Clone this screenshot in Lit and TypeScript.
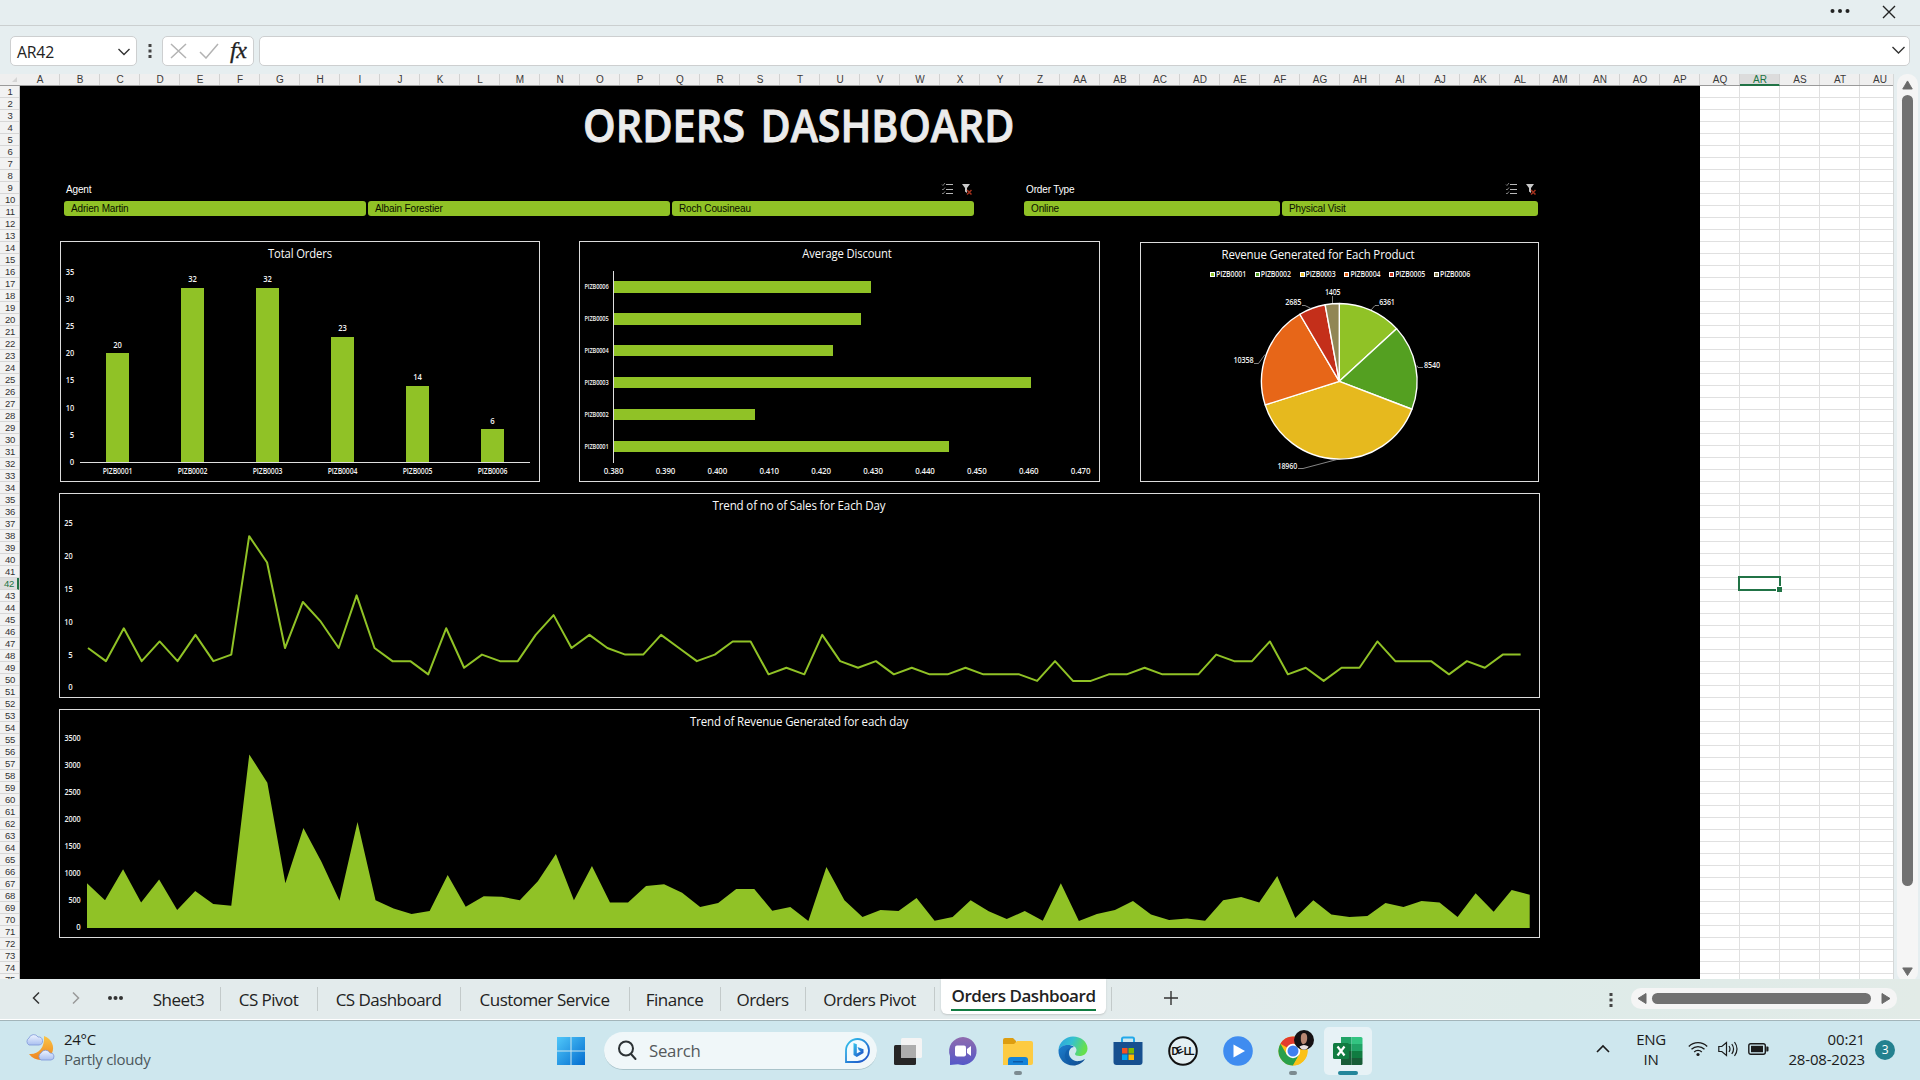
import { LitElement, html, svg, css } from "lit";
import { customElement, property } from "lit/decorators.js";

const GREEN = "#90c226";

const colName = (i: number): string =>
  i < 26 ? String.fromCharCode(65 + i) : "A" + String.fromCharCode(65 + i - 26);

const COLS = Array.from({ length: 47 }, (_, i) => colName(i));
const ROWS = Array.from({ length: 75 }, (_, i) => i + 1);
const PRODUCTS = ["PIZB0001", "PIZB0002", "PIZB0003", "PIZB0004", "PIZB0005", "PIZB0006"];

const ORDERS = [20, 32, 32, 23, 14, 6];
const DISCOUNT_END = [949, 755, 1031, 833, 861, 871];
const REVENUE = [6361, 8540, 18960, 10358, 2685, 1405];
const PIE_COLORS = ["#90c226", "#54a021", "#e6b91e", "#e76618", "#c42f1a", "#918655"];

const SALES = [
  6, 4, 9, 4, 7, 4, 8, 4, 5, 23, 19, 6, 13, 10, 6, 14, 6, 4, 4, 2, 9, 3, 5, 4, 4, 8, 11, 6, 8, 6, 5, 5, 8, 6, 4, 5,
  7, 7, 2, 3, 2, 8, 4, 3, 4, 2, 3, 2, 2, 3, 2, 2, 2, 1, 4, 1, 1, 2, 2, 3, 2, 2, 2, 5, 4, 4, 7, 2, 3, 1, 3, 3, 7, 4,
  4, 4, 2, 4, 3, 5, 5,
];

const DAILY = [
  830, 515, 1090, 470, 900, 335, 683, 445, 412, 3215, 2690, 830, 1850, 1228, 505, 1962, 515, 360, 258, 315, 980, 395,
  590, 578, 515, 864, 1370, 515, 1148, 470, 470, 778, 808, 654, 388, 462, 722, 722, 320, 388, 128, 1130, 515, 202, 333,
  315, 555, 134, 202, 515, 308, 166, 315, 134, 830, 128, 258, 333, 500, 252, 148, 178, 134, 515, 573, 470, 962, 185,
  515, 252, 202, 222, 462, 388, 500, 470, 202, 642, 302, 703, 617,
];

type Anchor = "start" | "middle" | "end";

const label = (x: number, base: number, text: string | number, len: number, size = 8.2, anchor: Anchor = "middle", fill = "#f2f2f2", weight = 600) =>
  svg`<text x=${x} y=${base} font-size=${size} font-weight=${weight} fill=${fill} text-anchor=${anchor} textLength=${len} lengthAdjust="spacingAndGlyphs">${text}</text>`;

const heading = (x: number, base: number, text: string, len: number) =>
  label(x, base + 0.4, text, len, 12.8, "middle", "#fafafa", 400);

@customElement("bar-panel")
class BarPanel extends LitElement {
  static styles = css`
    :host { display: block; width: 480px; height: 241px; }
    svg { display: block; font-family: "Open Sans", "Noto Sans", sans-serif; }
  `;
  render() {
    const h = (v: number) => v * 5.44;
    return html`<svg width="480" height="241" viewBox="60 241 480 241">
      <rect x="60.5" y="241.5" width="479" height="240" fill="none" stroke="#dcdcdc" />
      ${heading(300, 258, "Total Orders", 64)}
      ${[0, 5, 10, 15, 20, 25, 30, 35].map((v) => label(74, 465 - h(v), v, v < 10 ? 4.3 : 8.2, 8.2, "end"))}
      ${ORDERS.map((v, i) => svg`
        <rect x=${106 + i * 75} y=${Math.round(462 - h(v))} width="23" height=${462 - Math.round(462 - h(v))} fill=${GREEN} />
        ${label(117.5 + i * 75, 456.5 - h(v), v, v < 10 ? 4.3 : 8.4)}
        ${label(117.5 + i * 75, 474, PRODUCTS[i], 29.5)}`)}
      <rect x="80" y="462" width="450" height="1" fill="#e0e0e0" />
    </svg>`;
  }
}

@customElement("discount-panel")
class DiscountPanel extends LitElement {
  static styles = css`
    :host { display: block; width: 521px; height: 241px; }
    svg { display: block; font-family: "Open Sans", "Noto Sans", sans-serif; }
  `;
  render() {
    return html`<svg width="521" height="241" viewBox="579 241 521 241">
      <rect x="579.5" y="241.5" width="520" height="240" fill="none" stroke="#dcdcdc" />
      ${heading(847, 258, "Average Discount", 89.5)}
      ${DISCOUNT_END.map((end, i) => {
        const y = 441 - i * 32;
        return svg`<rect x="614" y=${y} width=${end - 614} height=${i > 3 ? 12 : 11} fill=${GREEN} />
          ${label(608.5, y + 7.6, PRODUCTS[i], 24, 6.4, "end")}`;
      })}
      <rect x="613" y="271" width="1" height="192" fill="#e0e0e0" />
      ${Array.from({ length: 10 }, (_, i) => label(613.5 + i * 51.9, 474, (0.38 + i * 0.01).toFixed(3), 19.5))}
    </svg>`;
  }
}

@customElement("pie-panel")
class PiePanel extends LitElement {
  static styles = css`
    :host { display: block; width: 399px; height: 240px; }
    svg { display: block; font-family: "Open Sans", "Noto Sans", sans-serif; }
  `;
  render() {
    const cx = 1339.3, cy = 381.3, r = 77.8;
    const total = REVENUE.reduce((a, b) => a + b, 0);
    let acc = 0;
    const at = (f: number) => `${cx + r * Math.sin(f * 2 * Math.PI)} ${cy - r * Math.cos(f * 2 * Math.PI)}`;
    const slices = REVENUE.map((v, i) => {
      const a = acc / total;
      acc += v;
      return svg`<path d="M${cx} ${cy}L${at(a)}A${r} ${r} 0 0 1 ${at(acc / total)}Z" fill=${PIE_COLORS[i]} stroke="#fff" stroke-width="1.4" stroke-linejoin="round" />`;
    });
    return html`<svg width="399" height="240" viewBox="1140 242 399 240">
      <rect x="1140.5" y="242.5" width="398" height="239" fill="none" stroke="#dcdcdc" />
      ${heading(1318, 259, "Revenue Generated for Each Product", 193)}
      ${PRODUCTS.map((p, i) => svg`
        <rect x=${1210.5 + Math.round(i * 44.8)} y="272.5" width="4" height="4" fill=${PIE_COLORS[i]} stroke="#fff" />
        ${label(1216 + i * 44.8, 277, p, 30, 8.2, "start")}`)}
      ${slices}
      <g fill="none" stroke="#a6a6a6" stroke-width="0.8">
        <path d="M1332.5 296v7M1302 305.5h3l6 3M1379 305.5h-4l-4 4.500M1423 367.500h-5l-1 -2M1254 363.500h4.500l6.500 -9M1298 468.500h5l34 -9" />
      </g>
      ${label(1332.7, 295, "1405", 15.5)} ${label(1293.3, 305, "2685", 16)} ${label(1387, 305, "6361", 15.5)}
      ${label(1432, 368, "8540", 16)} ${label(1243.5, 363, "10358", 20)} ${label(1287.3, 469, "18960", 19.5)}
    </svg>`;
  }
}

@customElement("line-panel")
class LinePanel extends LitElement {
  static styles = css`
    :host { display: block; width: 1481px; height: 205px; }
    svg { display: block; font-family: "Open Sans", "Noto Sans", sans-serif; }
  `;
  render() {
    const pts = SALES.map((v, i) => `${88 + i * 17.908},${687.5 - v * 6.58}`).join(" ");
    return html`<svg width="1481" height="205" viewBox="59 493 1481 205">
      <rect x="59.5" y="493.5" width="1480" height="204" fill="none" stroke="#dcdcdc" />
      ${heading(799, 510, "Trend of no of Sales for Each Day", 173)}
      ${[0, 5, 10, 15, 20, 25].map((v) => label(72.5, 690.4 - v * 6.58, v, v < 10 ? 4.3 : 8.2, 8.2, "end"))}
      <polyline points=${pts} fill="none" stroke=${GREEN} stroke-width="2" stroke-linejoin="round" />
    </svg>`;
  }
}

@customElement("area-panel")
class AreaPanel extends LitElement {
  static styles = css`
    :host { display: block; width: 1481px; height: 229px; }
    svg { display: block; font-family: "Open Sans", "Noto Sans", sans-serif; }
  `;
  render() {
    const pts = DAILY.map((v, i) => `${87 + i * 18.034},${928 - v * 0.054}`).join(" ");
    return html`<svg width="1481" height="229" viewBox="59 709 1481 229">
      <rect x="59.5" y="709.5" width="1480" height="228" fill="none" stroke="#dcdcdc" />
      ${heading(799, 726, "Trend of Revenue Generated for each day", 218)}
      ${[0, 500, 1000, 1500, 2000, 2500, 3000, 3500].map((v) =>
        label(80.5, 930.2 - v * 0.054, v, v === 0 ? 4.3 : v < 1000 ? 12 : 16, 8.2, "end"))}
      <polygon points="87,928 ${pts} 1529.7,928" fill=${GREEN} />
    </svg>`;
  }
}

@customElement("slicer-box")
class SlicerBox extends LitElement {
  @property() name = "";
  @property({ type: Array }) items: string[] = [];
  static styles = css`
    :host { display: block; }
    .head { display: flex; align-items: center; height: 14px; padding: 0 1px 0 2px; color: #fff; margin-bottom: 5px; }
    .name { flex: 1; }
    .head svg { display: block; }
    .items { display: flex; gap: 2px; }
    .item { flex: 1; height: 15px; line-height: 16px; border-radius: 3px; background: #90c226; color: #0a0f00; padding-left: 7px; }
  `;
  render() {
    return html`
      <div class="head">
        <span class="name">${this.name}</span>
        <svg width="32" height="12" viewBox="0 0 32 12">
          <path d="M5 1.500h7M5 6.500h7M5 10.500h7" stroke="#b8b8b8" fill="none" />
          <path d="M1 1.500l1 1 2-2.500M1 6l1 1 2-2.500M1 10l1 1 2-2.500" stroke="#8a8a8a" stroke-width=".9" fill="none" />
          <path d="M21 1h8l-3 4v5l-2-1.500V5z" fill="#c9c9c9" />
          <path d="M26 7l4.500 4.500M30.500 7L26 11.500" stroke="#a3301c" stroke-width="1.500" />
        </svg>
      </div>
      <div class="items">${this.items.map((t) => html`<div class="item">${t}</div>`)}</div>`;
  }
}

@customElement("task-bar")
class TaskBar extends LitElement {
  static styles = css`
    :host { display: flex; height: 59px; background: #cee7ee; font-family: "Open Sans", "Noto Sans", sans-serif; font-size: 15px; color: #1b1b1b; letter-spacing: -0.27px; }
    svg { display: block; }
    .weather { display: flex; gap: 8px; width: 528px; padding: 8px 0 0 24px; box-sizing: content-box; }
    .weather svg { margin-top: 1px; }
    .lines { line-height: 20px; white-space: nowrap; }
    .muted { color: #4c585c; }
    .apps { display: flex; align-items: center; flex: 1; }
    .start { width: 37px; padding-left: 4px; box-sizing: content-box; margin-right: 11px; }
    .search { display: flex; align-items: center; width: 273px; height: 38px; margin-right: 3px; border-radius: 19px; background: #f0f7f9; border-bottom: 1px solid #a9c3ca; box-sizing: border-box; padding: 0 6px 0 12px; gap: 11px; color: #55595b; font-size: 16.800px; }
    .search span { flex: 1; }
    .app { width: 55.1px; height: 48px; display: flex; flex-direction: column; align-items: center; justify-content: center; position: relative; }
    .tile { position: absolute; inset: 0 3.500px; border-radius: 5px; background: #e7f2f6; }
    .app svg { position: relative; overflow: visible; }
    .dot { position: absolute; bottom: 0; width: 8px; height: 4px; border-radius: 2px; background: #7c8b90; }
    .dot.on { width: 20px; background: #24869a; }
    .tray { display: flex; align-items: flex-start; padding: 8px 25px 0 0; }
    .lang { width: 48px; margin-left: 18px; text-align: center; line-height: 20px; }
    .status { display: flex; gap: 10px; margin: 10px 0 0 13px; }
    .clock { width: 96px; text-align: right; line-height: 20px; white-space: nowrap; letter-spacing: -0.17px; }
    .badge { width: 20px; height: 20px; border-radius: 50%; background: #24818f; color: #fff; text-align: center; font-size: 12px; line-height: 20px; margin: 11px 0 0 10px; }
    .chev { margin: 15px -1px 0 1px; }
  `;
  app(icon: unknown, dot = "", tile = false) {
    return html`<div class="app">${tile ? html`<div class="tile"></div>` : ""}${icon}${dot ? html`<i class="dot ${dot}"></i>` : ""}</div>`;
  }
  render() {
    return html`
      <div class="weather">
        <svg width="32" height="34" viewBox="0 0 32 34">
          <defs>
            <linearGradient id="mo" x1="0" y1="0" x2="0" y2="1"><stop offset="0" stop-color="#fbc545" /><stop offset="1" stop-color="#ef8420" /></linearGradient>
            <linearGradient id="cl" x1="0" y1="0" x2="0" y2="1"><stop offset="0" stop-color="#eef4ff" /><stop offset="1" stop-color="#a9bff0" /></linearGradient>
          </defs>
          <path d="M20 6c8 3 11 11 8 17-4 8-16 10-23 1 9 1 16-6 15-18z" fill="url(#mo)" />
          <path d="M5 15a4 4 0 0 1 0-7 5 5 0 0 1 9-1 4 4 0 0 1 1 8z" fill="url(#cl)" stroke="#7f98d9" stroke-width=".8" />
          <path d="M17 30a4 4 0 0 1 0-7 5 5 0 0 1 9 0 3.500 3.500 0 0 1 1 7z" fill="url(#cl)" stroke="#7f98d9" stroke-width=".8" />
        </svg>
        <div class="lines"><div>24°C</div><div class="muted">Partly cloudy</div></div>
      </div>
      <div class="apps">
        <div class="start">
          <svg width="30" height="30" viewBox="0 0 30 30">
            <defs><linearGradient id="w" gradientUnits="userSpaceOnUse" x1="0" y1="0" x2="30" y2="30"><stop offset="0" stop-color="#53cbfb" /><stop offset="1" stop-color="#0069ce" /></linearGradient></defs>
            <path d="M1 1h13.500v13.500H1zM15.500 1H29v13.500H15.500zM1 15.500h13.500V29H1zM15.500 15.500H29V29H15.500z" fill="url(#w)" />
          </svg>
        </div>
        <div class="search">
          <svg width="22" height="22" viewBox="0 0 22 22" fill="none" stroke="#2c3235" stroke-width="2"><circle cx="10" cy="9.500" r="7" /><path d="M15 15l4.500 5" stroke-linecap="round" /></svg>
          <span>Search</span>
          <svg width="27" height="27" viewBox="0 0 27 27">
            <defs><linearGradient id="b" x1="0" y1="0" x2="1" y2="1"><stop offset="0" stop-color="#35c7ee" /><stop offset="1" stop-color="#1a48c4" /></linearGradient></defs>
            <path d="M2 25V13.500A11.500 11.500 0 1 1 13.500 25z" fill="#f2fbff" stroke="url(#b)" stroke-width="1.8" />
            <path d="M9.500 6l3.300 1.200v9.300l4-2.300-2-1-1.300-3.200 6 2.300v3.600l-6.700 4-3.300-2z" fill="url(#b)" />
          </svg>
        </div>
        ${this.app(html`<svg width="30" height="30" viewBox="0 0 30 30">
          <rect x="1" y="9" width="22" height="20" rx="1.500" fill="#262626" /><rect x="8" y="2" width="21" height="20" rx="1.500" fill="#f4f4f4" /><path d="M8 9h15v13H8z" fill="#adadad" /></svg>`)}
        ${this.app(html`<svg width="30" height="30" viewBox="0 0 30 30">
          <defs><linearGradient id="t" x1="0" y1="0" x2="0" y2="1"><stop offset="0" stop-color="#8f6bae" /><stop offset="1" stop-color="#5558c8" /></linearGradient></defs>
          <path d="M15 1a14 14 0 1 1-5 27.200L2 29V20A14 14 0 0 1 15 1z" fill="url(#t)" /><rect x="7" y="9.500" width="11" height="11" rx="2" fill="#fff" /><path d="M19 13l4-3v10l-4-3z" fill="#fff" /></svg>`)}
        ${this.app(html`<svg width="32" height="30" viewBox="0 0 32 30">
          <path d="M1 4q0-2 2-2h8l3 3v6H1z" fill="#dd9d10" /><path d="M1 8h11l3-3h14q2 0 2 2v20q0 2-2 2H1z" fill="#fdcb42" /><path d="M6 29v-5q0-3 3-3h14q3 0 3 3v5z" fill="#1583d8" /><path d="M11 25h10v1.500H11z" fill="#0b5aa8" /></svg>`, "off")}
        ${this.app(html`<svg width="30" height="30" viewBox="0 0 30 30">
          <defs><linearGradient id="e1" x1="0" y1="0" x2="1" y2=".3"><stop offset="0" stop-color="#2a9fe0" /><stop offset=".5" stop-color="#35c1d0" /><stop offset="1" stop-color="#66e04d" /></linearGradient>
          <linearGradient id="e2" x1="0" y1="0" x2="1" y2="1"><stop offset="0" stop-color="#1b7fd0" /><stop offset="1" stop-color="#114a8c" /></linearGradient></defs>
          <path d="M.5 14C1 6 8 .5 15 .5c8 0 14.500 5.500 14.500 12 0 5-4 7.500-8 7.500-3 0-4.500-1-4.500-2 0-1 1.500-2 1.500-4C18.500 11 15 9 11 9 6 9 2 11 .5 14z" fill="url(#e1)" />
          <path d="M.5 14C2 10.500 6 9 9.500 9c3 0 5 .5 6.500 2-3 0-5 3-5 6 0 5 5 9 10 8 2.500-.3 4.500-1.300 6-2-2.500 4-7 6.500-12 6.500C7 29.500 0 23 .5 14z" fill="url(#e2)" />
          <path d="M12 12c-5 2-7 9-3 13 3 3.500 6 4.500 9 4.300-4-1.300-8-6-7.500-11 .2-3 1-4.800 1.500-6.300z" fill="#0d5aa7" opacity=".6" /></svg>`)}
        ${this.app(html`<svg width="30" height="30" viewBox="0 0 30 30">
          <path d="M9 6V3q0-1.500 1.500-1.500h9Q21 1.500 21 3v3" fill="none" stroke="#22a9ea" stroke-width="2" /><path d="M.5 6h29v20q0 3-3 3h-23q-3 0-3-3z" fill="#17508f" />
          <path d="M9 12h5.500v5.500H9z" fill="#f25022" /><path d="M15.500 12H21v5.500h-5.500z" fill="#7fba00" /><path d="M9 18.500h5.500V24H9z" fill="#00a4ef" /><path d="M15.500 18.500H21V24h-5.500z" fill="#ffb900" /></svg>`)}
        ${this.app(html`<svg width="30" height="30" viewBox="0 0 30 30">
          <circle cx="15" cy="15" r="13.800" fill="#e4f0f3" stroke="#111" stroke-width="2" /><g font-family="Liberation Sans, sans-serif" font-weight="700" font-size="10" letter-spacing="0" fill="#111"><text y="18.600" x="3.500 10 15.700 20.500" rotate="0 -25 0 0">DELL</text></g></svg>`)}
        ${this.app(html`<svg width="30" height="30" viewBox="0 0 30 30"><circle cx="15" cy="15" r="14.800" fill="#3f8cf0" /><path d="M10.500 8.500v13L22 15z" fill="#fff" /></svg>`)}
        ${this.app(html`<svg width="30" height="30" viewBox="0 0 30 30">
          <circle cx="15" cy="15" r="14.500" fill="#fbc116" />
          <path d="M15 15L2.440 7.750A14.500 14.500 0 0 1 27.560 7.750z" fill="#e33b2e" />
          <path d="M2.440 7.750A14.500 14.500 0 0 0 15 29.500l6.300-11L15 15 8.700 18.500z" fill="#29a04a" />
          <path d="M27.560 7.750H15l6.300 10.800L15 29.500A14.500 14.500 0 0 0 27.560 7.750z" fill="#fbc116" />
          <circle cx="15" cy="15" r="7.200" fill="#fff" /><circle cx="15" cy="15" r="5.500" fill="#3f7fee" />
          <circle cx="26" cy="4" r="10" fill="#151113" /><path d="M22.800 2q0-5 3.200-5t3.200 5q0 5-3.200 6t-3.200-6z" fill="#b98772" /><path d="M21.500 10.500q4.500-3 9 0-1 3-4.500 3.300-3.500-.3-4.500-3.300z" fill="#e9dfdf" /></svg>`, "off")}
        ${this.app(html`<svg width="30" height="30" viewBox="0 0 30 30">
          <path d="M8 1h10.500v7H8z" fill="#21a366" /><path d="M18.500 1H28q1.500 0 1.500 1.500V8h-11z" fill="#33c481" /><path d="M8 8h10.500v7H8z" fill="#107c41" /><path d="M18.500 8h11v7h-11z" fill="#21a366" /><path d="M8 15h10.500v14H8z" fill="#185c37" /><path d="M18.500 15h11v7h-11z" fill="#107c41" /><path d="M18.500 22h11v5.500q0 1.500-1.500 1.500h-9.500z" fill="#185c37" />
          <rect x="0" y="7" width="16" height="16" rx="1.500" fill="#107c41" /><path d="M4.500 10.500l7 9M11.500 10.500l-7 9" stroke="#fff" stroke-width="2.200" /></svg>`, "on", true)}
      </div>
      <div class="tray">
        <svg class="chev" width="14" height="10" viewBox="0 0 14 10"><path d="M1 8l6-6 6 6" fill="none" stroke="#1b1b1b" stroke-width="1.600" /></svg>
        <div class="lang"><div>ENG</div><div>IN</div></div>
        <div class="status">
          <svg width="20" height="20" viewBox="0 0 20 20" fill="none" stroke="#1b1b1b" stroke-width="1.300"><path d="M.8 7.500a13 13 0 0 1 18.400 0M3.500 10.300a9.200 9.200 0 0 1 13 0M6.200 13a5.400 5.400 0 0 1 7.600 0" /><circle cx="10" cy="15.500" r="1.600" fill="#1b1b1b" stroke="none" /></svg>
          <svg width="20" height="20" viewBox="0 0 20 20" fill="none" stroke="#1b1b1b" stroke-width="1.200"><path d="M.8 7.500h3L8.500 3.500v13l-4.700-4h-3zM11 7q2 3 0 6M13.800 5q3.500 5 0 10M16.500 3q5 7 0 14" /></svg>
          <svg width="21" height="20" viewBox="0 0 21 20"><rect x=".8" y="4.700" width="16.500" height="10.600" rx="2" fill="none" stroke="#1b1b1b" stroke-width="1.400" /><rect x="3" y="6.800" width="12" height="6.400" fill="#1b1b1b" /><path d="M18.300 7.500h1.200q1 0 1 1v3q0 1-1 1h-1.200z" fill="#1b1b1b" /></svg>
        </div>
        <div class="clock"><div>00:21</div><div>28-08-2023</div></div>
        <div class="badge">3</div>
      </div>`;
  }
}

@customElement("app-root")
class AppRoot extends LitElement {
  static styles = css`
    :host { display: flex; flex-direction: column; width: 1920px; height: 1080px; overflow: hidden; background: #e6eef0; font-family: "Open Sans", "Noto Sans", sans-serif; color: #222; }
    * { box-sizing: border-box; }
    svg { display: block; }
    .title-bar { height: 26px; border-bottom: 1px solid #cbcfd0; display: flex; justify-content: flex-end; align-items: center; gap: 32px; padding: 0 24px 1px 0; flex: none; }
    .formula { height: 48px; display: flex; padding: 10px 10px 8px; flex: none; }
    .box { height: 30px; background: #fff; border: 1px solid #cdcfd0; border-radius: 5px; display: flex; align-items: center; }
    .name-box { width: 127px; padding: 1px 6px 0; font-size: 15.800px; letter-spacing: -0.2px; justify-content: space-between; }
    .vdots { width: 25px; display: flex; justify-content: center; align-items: center; }
    .fx { width: 92px; margin-right: 5px; gap: 12px; padding-left: 7px; }
    .fx i { font: italic 400 24px/24px "Liberation Serif", serif; letter-spacing: -0.5px; color: #222; -webkit-text-stroke: 0.3px #222; margin: -3px 0 0 -1px; }
    .input { flex: 1; justify-content: flex-end; padding: 0 4px 2px 0; }
    .work { display: flex; height: 905px; flex: none; }
    .sheet { width: 1894px; height: 905px; overflow: hidden; flex: none; border-right: 1px solid #d5d8d8; font-family: "Liberation Sans", Arial, sans-serif; }
    .cols { display: flex; height: 12px; background: #efefef; border-bottom: 1px solid #9a9a9a; font-size: 10px; line-height: 12px; color: #3a3a3a; }
    .corner { width: 20px; flex: none; display: flex; justify-content: flex-end; align-items: flex-end; padding: 0 3px 3px 0; }
    .col { width: 40px; flex: none; text-align: center; border-right: 1px solid #d2d2d2; height: 11px; padding-left: 1px; }
    .col.sel { background: #dcdcdc; color: #1a7443; border-bottom: 2px solid #217346; height: 12px; }
    .body { display: flex; }
    .rows { width: 20px; flex: none; background: #f2f2f2; border-right: 1px solid #c4c4c4; }
    .row { height: 12px; line-height: 12px; font-size: 9.500px; text-align: center; letter-spacing: -0.4px; color: #333; border-bottom: 1px solid #d6d6d6; padding-left: 1px; }
    .row.sel { background: #dedede; color: #1a7443; border-right: 2px solid #217346; }
    .dash { width: 1680px; height: 900px; background: #000; flex: none; padding: 14px 0 0 39px; font-size: 10px; letter-spacing: -0.15px; }
    .heading { margin-left: 523px; overflow: visible; }
    .heading text { font: 600 45px "Open Sans", sans-serif; fill: #ebebeb; stroke: #ebebeb; stroke-width: 0.9px; letter-spacing: 0; }
    .slicers { display: flex; gap: 50px; margin: 24px 0 0 5px; }
    .agent { width: 910px; }
    .type { width: 514px; }
    .top { display: flex; margin-top: 25px; padding-left: 1px; }
    .top discount-panel { margin-left: 39px; }
    .top pie-panel { margin: 1px 0 0 40px; }
    line-panel { margin-top: 11px; }
    area-panel { margin-top: 11px; }
    .grid { flex: 1; height: 900px; background-color: #fff; background-image: linear-gradient(to left, #e0e0e0 1px, transparent 1px), linear-gradient(to top, #e0e0e0 1px, transparent 1px); background-size: 40px 12px; position: relative; }
    .cursor { position: absolute; left: 38px; top: 490px; width: 43px; height: 15px; border: 2px solid #217346; }
    .handle { position: absolute; right: -3px; bottom: -3px; width: 6px; height: 6px; background: #217346; border: solid #fff; border-width: 1px 0 0 1px; }
    .vscroll { width: 21px; height: 908px; margin-left: 3px; border-radius: 10px; background: #f5f5f5; display: flex; flex-direction: column; align-items: center; padding: 6px 0; }
    .vthumb { width: 11px; height: 791px; border-radius: 5.500px; background: #717171; margin: 5px 0 81px; flex: none; }
    .tabs { height: 42px; flex: none; display: flex; background: linear-gradient(90deg, #e3ebec 55%, #deebe9 80%, #e2ebe7); border-bottom: 1px solid #a3b5ba; box-shadow: inset 0 -1px #fff; font-size: 17px; letter-spacing: -0.54px; white-space: nowrap; }
    .nav { width: 138px; padding: 12px 0 0 32px; display: flex; gap: 32px; flex: none; }
    .dots { margin-left: -4px; }
    .tab { height: 24px; margin-top: 8px; line-height: 25px; text-align: center; border-right: 1px solid #c3caca; flex: none; padding-right: 1px; }
    .active { width: 165px; height: 35px; margin-left: 6px; background: #fff; border-radius: 0 0 6px 6px; display: flex; justify-content: center; font-weight: 600; box-shadow: 0 1px 2px #c2c8c8; flex: none; }
    .active span { height: 32px; line-height: 34px; border-bottom: 2px solid #107c41; width: 145px; display: flex; justify-content: center; letter-spacing: -0.45px; }
    .sep { width: 1px; height: 24px; margin: 8px 0 0 5px; background: #c3caca; }
    .plus { margin: 12px 0 0 52px; }
    .more { margin: 14px 18px 0 auto; }
    .hscroll { width: 266px; height: 21px; margin: 9px 23px 0 0; background: #f5f5f5; border-radius: 10px; display: flex; align-items: center; justify-content: space-between; padding: 0 6px; }
    .hthumb { width: 219px; height: 11px; border-radius: 5.500px; background: #717171; margin-right: 5px; }
  `;
  render() {
    const tabs: [string, number][] = [["Sheet3", 83], ["CS Pivot", 97], ["CS Dashboard", 143], ["Customer Service", 169], ["Finance", 91], ["Orders", 85], ["Orders Pivot", 129]];
    const vdots = html`<svg width="4" height="14" viewBox="0 0 4 14"><path d="M.5 0h3v3h-3zM.5 5.500h3v3h-3zM.5 11h3v3h-3z" fill="#444" /></svg>`;
    return html`
      <div class="title-bar">
        <svg width="20" height="6" viewBox="0 0 20 6" fill="#222"><circle cx="2.500" cy="2" r="2" /><circle cx="10" cy="2" r="2" /><circle cx="17.500" cy="2" r="2" /></svg>
        <svg width="14" height="14" viewBox="0 0 14 14"><path d="M1 1l12 12M13 1L1 13" stroke="#222" stroke-width="1.400" /></svg>
      </div>
      <div class="formula">
        <div class="box name-box"><span>AR42</span><svg width="12" height="8" viewBox="0 0 12 8"><path d="M.5 1L6 6.500 11.500 1" fill="none" stroke="#333" stroke-width="1.400" /></svg></div>
        <div class="vdots">${vdots}</div>
        <div class="box fx">
          <svg width="17" height="16" viewBox="0 0 17 16"><path d="M1 1l15 14M16 1L1 15" stroke="#b3b3b3" stroke-width="1.500" /></svg>
          <svg width="20" height="16" viewBox="0 0 20 16"><path d="M1 9l6 6L19 1" fill="none" stroke="#b3b3b3" stroke-width="1.500" /></svg>
          <i>fx</i>
        </div>
        <div class="box input"><svg width="13" height="8" viewBox="0 0 13 8"><path d="M.5 1l6 6 6-6" fill="none" stroke="#333" stroke-width="1.400" /></svg></div>
      </div>
      <div class="work">
        <div class="sheet">
          <div class="cols">
            <div class="corner"><svg width="5" height="5" viewBox="0 0 5 5"><path d="M5 0v5H0z" fill="#d5d5d5" /></svg></div>
            ${COLS.map((c) => html`<div class="col ${c === "AR" ? "sel" : ""}">${c}</div>`)}
          </div>
          <div class="body">
            <div class="rows">${ROWS.map((r) => html`<div class="row ${r === 42 ? "sel" : ""}">${r}</div>`)}</div>
            <div class="dash">
              <svg class="heading" width="440" height="58" viewBox="0 0 440 58">
                <text x="1" y="42" textLength="162" lengthAdjust="spacingAndGlyphs">ORDERS</text>
                <text x="178.500" y="42" textLength="254" lengthAdjust="spacingAndGlyphs">DASHBOARD</text>
              </svg>
              <div class="slicers">
                <slicer-box class="agent" name="Agent" .items=${["Adrien Martin", "Albain Forestier", "Roch Cousineau"]}></slicer-box>
                <slicer-box class="type" name="Order Type" .items=${["Online", "Physical Visit"]}></slicer-box>
              </div>
              <div class="top"><bar-panel></bar-panel><discount-panel></discount-panel><pie-panel></pie-panel></div>
              <line-panel></line-panel>
              <area-panel></area-panel>
            </div>
            <div class="grid"><div class="cursor"><div class="handle"></div></div></div>
          </div>
        </div>
        <div class="vscroll">
          <svg width="11" height="10" viewBox="0 0 11 10"><path d="M5.500 1l5 8.500H.5z" fill="#6b6b6b" stroke="#6b6b6b" stroke-linejoin="round" /></svg>
          <div class="vthumb"></div>
          <svg width="11" height="10" viewBox="0 0 11 10"><path d="M.5 1h10l-5 8z" fill="#6b6b6b" stroke="#6b6b6b" stroke-linejoin="round" /></svg>
        </div>
      </div>
      <div class="tabs">
        <div class="nav">
          <svg width="8" height="14" viewBox="0 0 8 14"><path d="M7 1.500L1.500 7 7 12.500" fill="none" stroke="#333" stroke-width="1.500" /></svg>
          <svg width="8" height="14" viewBox="0 0 8 14"><path d="M1 1.500L6.500 7 1 12.500" fill="none" stroke="#999" stroke-width="1.500" /></svg>
          <svg class="dots" width="15" height="14" viewBox="0 0 15 14" fill="#333"><circle cx="2" cy="7" r="2" /><circle cx="7.500" cy="7" r="2" /><circle cx="13" cy="7" r="2" /></svg>
        </div>
        ${tabs.map(([t, w]) => html`<div class="tab" style="width:${w}px">${t}</div>`)}
        <div class="active"><span>Orders Dashboard</span></div>
        <div class="sep"></div>
        <svg class="plus" width="14" height="14" viewBox="0 0 14 14"><path d="M7 0v14M0 7h14" stroke="#333" stroke-width="1.400" /></svg>
        <div class="more">${vdots}</div>
        <div class="hscroll">
          <svg width="10" height="11" viewBox="0 0 10 11"><path d="M9 .5v10l-8-5z" fill="#6b6b6b" stroke="#6b6b6b" stroke-linejoin="round" /></svg>
          <div class="hthumb"></div>
          <svg width="10" height="11" viewBox="0 0 10 11"><path d="M1 .5v10l8-5z" fill="#6b6b6b" stroke="#6b6b6b" stroke-linejoin="round" /></svg>
        </div>
      </div>
      <task-bar></task-bar>`;
  }
}
